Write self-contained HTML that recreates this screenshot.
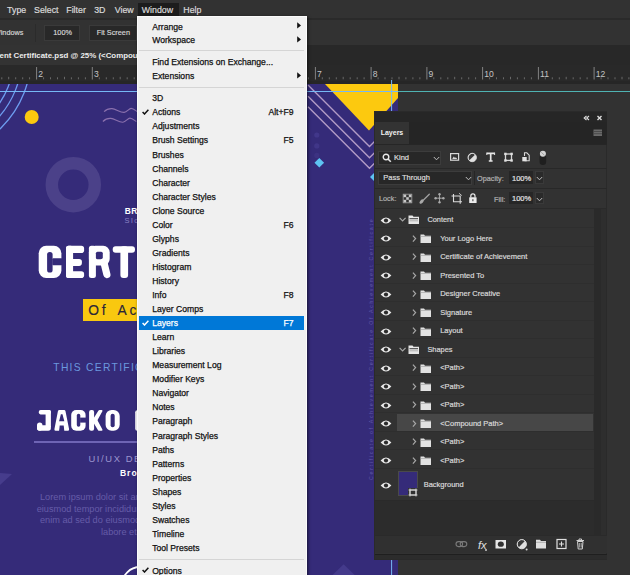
<!DOCTYPE html><html><head><meta charset="utf-8"><style>
html,body{margin:0;padding:0;width:630px;height:575px;overflow:hidden;background:#282828}
.r{position:absolute}
.t{position:absolute;white-space:nowrap;font-family:"Liberation Sans",sans-serif}
.p{-webkit-text-stroke:0.2px currentColor}
svg text{font-family:"Liberation Sans",sans-serif}
</style></head><body>
<div class="r" style="left:0px;top:0px;width:630px;height:575px;background:#323232;"></div>
<div class="r" style="left:0px;top:0px;width:630px;height:18px;background:#323232;"></div>
<div class="r" style="left:0px;top:18px;width:630px;height:1.5px;background:#2a2a2a;"></div>
<div class="r" style="left:138px;top:3px;width:41px;height:14px;background:#1c1c1c;"></div>
<div class="t " style="left:7.10px;top:5.95px;font-size:8.8px;line-height:8.8px;color:#dadada;font-weight:400;letter-spacing:0px;-webkit-text-stroke:0.2px #dadada">Type</div>
<div class="t " style="left:34.10px;top:5.95px;font-size:8.8px;line-height:8.8px;color:#dadada;font-weight:400;letter-spacing:0px;-webkit-text-stroke:0.2px #dadada">Select</div>
<div class="t " style="left:66.30px;top:5.95px;font-size:8.8px;line-height:8.8px;color:#dadada;font-weight:400;letter-spacing:0px;-webkit-text-stroke:0.2px #dadada">Filter</div>
<div class="t " style="left:94.20px;top:5.95px;font-size:8.8px;line-height:8.8px;color:#dadada;font-weight:400;letter-spacing:0px;-webkit-text-stroke:0.2px #dadada">3D</div>
<div class="t " style="left:114.80px;top:5.95px;font-size:8.8px;line-height:8.8px;color:#dadada;font-weight:400;letter-spacing:0px;-webkit-text-stroke:0.2px #dadada">View</div>
<div class="t " style="left:141.80px;top:5.95px;font-size:8.8px;line-height:8.8px;color:#dadada;font-weight:400;letter-spacing:0px;-webkit-text-stroke:0.2px #dadada">Window</div>
<div class="t " style="left:183.30px;top:5.95px;font-size:8.8px;line-height:8.8px;color:#dadada;font-weight:400;letter-spacing:0px;-webkit-text-stroke:0.2px #dadada">Help</div>
<div class="r" style="left:0px;top:19.5px;width:630px;height:25.5px;background:#323232;"></div>
<div class="r" style="left:35.3px;top:24px;width:1px;height:18px;background:#2b2b2b;"></div>
<div class="t " style="left:-6.20px;top:29.22px;font-size:7.3px;line-height:7.3px;color:#d8d8d8;font-weight:400;letter-spacing:0px;-webkit-text-stroke:0.15px #d8d8d8">Windows</div>
<div class="r" style="left:44.4px;top:25px;width:35.6px;height:15.6px;background:#282828;border:1px solid #3a3a3a;box-sizing:border-box"></div>
<div class="t " style="left:53.30px;top:29.22px;font-size:7.3px;line-height:7.3px;color:#d8d8d8;font-weight:400;letter-spacing:0px;-webkit-text-stroke:0.15px #d8d8d8">100%</div>
<div class="r" style="left:88.9px;top:25px;width:47.8px;height:15.6px;background:#282828;border:1px solid #3a3a3a;box-sizing:border-box"></div>
<div class="t " style="left:96.70px;top:29.22px;font-size:7.3px;line-height:7.3px;color:#d8d8d8;font-weight:400;letter-spacing:0px;-webkit-text-stroke:0.15px #d8d8d8">Fit Screen</div>
<div class="r" style="left:0px;top:45px;width:630px;height:19.5px;background:#282828;"></div>
<div class="r" style="left:0px;top:45px;width:300px;height:19.5px;background:#333333;"></div>
<div class="t " style="left:-0.50px;top:52.21px;font-size:7.9px;line-height:7.9px;color:#ececec;font-weight:700;letter-spacing:0px;">ent Certificate.psd @ 25% (&lt;Compound Path, RGB/8) *</div>
<div class="r" style="left:0px;top:64.5px;width:630px;height:16px;background:#292929;"></div>
<div class="r" style="left:0px;top:80.5px;width:630px;height:3.5px;background:#262626;"></div>
<svg class="r" style="left:0;top:0" width="630" height="90"><line x1="-19.1" y1="67" x2="-19.1" y2="79.5" stroke="#8c8c8c" stroke-width="0.9"/><text x="-17.5" y="77.3" fill="#c4c4c4" font-size="8.6" font-family="Liberation Sans">1</text><line x1="-12.2" y1="77.3" x2="-12.2" y2="79.3" stroke="#707070" stroke-width="0.9"/><line x1="-5.2" y1="77.3" x2="-5.2" y2="79.3" stroke="#707070" stroke-width="0.9"/><line x1="1.8" y1="77.3" x2="1.8" y2="79.3" stroke="#707070" stroke-width="0.9"/><line x1="8.7" y1="76.8" x2="8.7" y2="79.3" stroke="#707070" stroke-width="0.9"/><line x1="15.7" y1="77.3" x2="15.7" y2="79.3" stroke="#707070" stroke-width="0.9"/><line x1="22.7" y1="77.3" x2="22.7" y2="79.3" stroke="#707070" stroke-width="0.9"/><line x1="29.6" y1="77.3" x2="29.6" y2="79.3" stroke="#707070" stroke-width="0.9"/><line x1="36.6" y1="67" x2="36.6" y2="79.5" stroke="#8c8c8c" stroke-width="0.9"/><text x="38.2" y="77.3" fill="#c4c4c4" font-size="8.6" font-family="Liberation Sans">2</text><line x1="43.6" y1="77.3" x2="43.6" y2="79.3" stroke="#707070" stroke-width="0.9"/><line x1="50.5" y1="77.3" x2="50.5" y2="79.3" stroke="#707070" stroke-width="0.9"/><line x1="57.5" y1="77.3" x2="57.5" y2="79.3" stroke="#707070" stroke-width="0.9"/><line x1="64.5" y1="76.8" x2="64.5" y2="79.3" stroke="#707070" stroke-width="0.9"/><line x1="71.4" y1="77.3" x2="71.4" y2="79.3" stroke="#707070" stroke-width="0.9"/><line x1="78.4" y1="77.3" x2="78.4" y2="79.3" stroke="#707070" stroke-width="0.9"/><line x1="85.4" y1="77.3" x2="85.4" y2="79.3" stroke="#707070" stroke-width="0.9"/><line x1="92.3" y1="67" x2="92.3" y2="79.5" stroke="#8c8c8c" stroke-width="0.9"/><text x="93.9" y="77.3" fill="#c4c4c4" font-size="8.6" font-family="Liberation Sans">3</text><line x1="99.3" y1="77.3" x2="99.3" y2="79.3" stroke="#707070" stroke-width="0.9"/><line x1="106.3" y1="77.3" x2="106.3" y2="79.3" stroke="#707070" stroke-width="0.9"/><line x1="113.3" y1="77.3" x2="113.3" y2="79.3" stroke="#707070" stroke-width="0.9"/><line x1="120.2" y1="76.8" x2="120.2" y2="79.3" stroke="#707070" stroke-width="0.9"/><line x1="127.2" y1="77.3" x2="127.2" y2="79.3" stroke="#707070" stroke-width="0.9"/><line x1="134.2" y1="77.3" x2="134.2" y2="79.3" stroke="#707070" stroke-width="0.9"/><line x1="141.1" y1="77.3" x2="141.1" y2="79.3" stroke="#707070" stroke-width="0.9"/><line x1="148.1" y1="67" x2="148.1" y2="79.5" stroke="#8c8c8c" stroke-width="0.9"/><text x="149.7" y="77.3" fill="#c4c4c4" font-size="8.6" font-family="Liberation Sans">4</text><line x1="155.1" y1="77.3" x2="155.1" y2="79.3" stroke="#707070" stroke-width="0.9"/><line x1="162.0" y1="77.3" x2="162.0" y2="79.3" stroke="#707070" stroke-width="0.9"/><line x1="169.0" y1="77.3" x2="169.0" y2="79.3" stroke="#707070" stroke-width="0.9"/><line x1="176.0" y1="76.8" x2="176.0" y2="79.3" stroke="#707070" stroke-width="0.9"/><line x1="182.9" y1="77.3" x2="182.9" y2="79.3" stroke="#707070" stroke-width="0.9"/><line x1="189.9" y1="77.3" x2="189.9" y2="79.3" stroke="#707070" stroke-width="0.9"/><line x1="196.9" y1="77.3" x2="196.9" y2="79.3" stroke="#707070" stroke-width="0.9"/><line x1="203.8" y1="67" x2="203.8" y2="79.5" stroke="#8c8c8c" stroke-width="0.9"/><text x="205.4" y="77.3" fill="#c4c4c4" font-size="8.6" font-family="Liberation Sans">5</text><line x1="210.8" y1="77.3" x2="210.8" y2="79.3" stroke="#707070" stroke-width="0.9"/><line x1="217.8" y1="77.3" x2="217.8" y2="79.3" stroke="#707070" stroke-width="0.9"/><line x1="224.8" y1="77.3" x2="224.8" y2="79.3" stroke="#707070" stroke-width="0.9"/><line x1="231.7" y1="76.8" x2="231.7" y2="79.3" stroke="#707070" stroke-width="0.9"/><line x1="238.7" y1="77.3" x2="238.7" y2="79.3" stroke="#707070" stroke-width="0.9"/><line x1="245.7" y1="77.3" x2="245.7" y2="79.3" stroke="#707070" stroke-width="0.9"/><line x1="252.6" y1="77.3" x2="252.6" y2="79.3" stroke="#707070" stroke-width="0.9"/><line x1="259.6" y1="67" x2="259.6" y2="79.5" stroke="#8c8c8c" stroke-width="0.9"/><text x="261.2" y="77.3" fill="#c4c4c4" font-size="8.6" font-family="Liberation Sans">6</text><line x1="266.6" y1="77.3" x2="266.6" y2="79.3" stroke="#707070" stroke-width="0.9"/><line x1="273.5" y1="77.3" x2="273.5" y2="79.3" stroke="#707070" stroke-width="0.9"/><line x1="280.5" y1="77.3" x2="280.5" y2="79.3" stroke="#707070" stroke-width="0.9"/><line x1="287.5" y1="76.8" x2="287.5" y2="79.3" stroke="#707070" stroke-width="0.9"/><line x1="294.4" y1="77.3" x2="294.4" y2="79.3" stroke="#707070" stroke-width="0.9"/><line x1="301.4" y1="77.3" x2="301.4" y2="79.3" stroke="#707070" stroke-width="0.9"/><line x1="308.4" y1="77.3" x2="308.4" y2="79.3" stroke="#707070" stroke-width="0.9"/><line x1="315.4" y1="67" x2="315.4" y2="79.5" stroke="#8c8c8c" stroke-width="0.9"/><text x="317.0" y="77.3" fill="#c4c4c4" font-size="8.6" font-family="Liberation Sans">7</text><line x1="322.3" y1="77.3" x2="322.3" y2="79.3" stroke="#707070" stroke-width="0.9"/><line x1="329.3" y1="77.3" x2="329.3" y2="79.3" stroke="#707070" stroke-width="0.9"/><line x1="336.3" y1="77.3" x2="336.3" y2="79.3" stroke="#707070" stroke-width="0.9"/><line x1="343.2" y1="76.8" x2="343.2" y2="79.3" stroke="#707070" stroke-width="0.9"/><line x1="350.2" y1="77.3" x2="350.2" y2="79.3" stroke="#707070" stroke-width="0.9"/><line x1="357.2" y1="77.3" x2="357.2" y2="79.3" stroke="#707070" stroke-width="0.9"/><line x1="364.1" y1="77.3" x2="364.1" y2="79.3" stroke="#707070" stroke-width="0.9"/><line x1="371.1" y1="67" x2="371.1" y2="79.5" stroke="#8c8c8c" stroke-width="0.9"/><text x="372.7" y="77.3" fill="#c4c4c4" font-size="8.6" font-family="Liberation Sans">8</text><line x1="378.1" y1="77.3" x2="378.1" y2="79.3" stroke="#707070" stroke-width="0.9"/><line x1="385.0" y1="77.3" x2="385.0" y2="79.3" stroke="#707070" stroke-width="0.9"/><line x1="392.0" y1="77.3" x2="392.0" y2="79.3" stroke="#707070" stroke-width="0.9"/><line x1="399.0" y1="76.8" x2="399.0" y2="79.3" stroke="#707070" stroke-width="0.9"/><line x1="405.9" y1="77.3" x2="405.9" y2="79.3" stroke="#707070" stroke-width="0.9"/><line x1="412.9" y1="77.3" x2="412.9" y2="79.3" stroke="#707070" stroke-width="0.9"/><line x1="419.9" y1="77.3" x2="419.9" y2="79.3" stroke="#707070" stroke-width="0.9"/><line x1="426.9" y1="67" x2="426.9" y2="79.5" stroke="#8c8c8c" stroke-width="0.9"/><text x="428.5" y="77.3" fill="#c4c4c4" font-size="8.6" font-family="Liberation Sans">9</text><line x1="433.8" y1="77.3" x2="433.8" y2="79.3" stroke="#707070" stroke-width="0.9"/><line x1="440.8" y1="77.3" x2="440.8" y2="79.3" stroke="#707070" stroke-width="0.9"/><line x1="447.8" y1="77.3" x2="447.8" y2="79.3" stroke="#707070" stroke-width="0.9"/><line x1="454.7" y1="76.8" x2="454.7" y2="79.3" stroke="#707070" stroke-width="0.9"/><line x1="461.7" y1="77.3" x2="461.7" y2="79.3" stroke="#707070" stroke-width="0.9"/><line x1="468.7" y1="77.3" x2="468.7" y2="79.3" stroke="#707070" stroke-width="0.9"/><line x1="475.6" y1="77.3" x2="475.6" y2="79.3" stroke="#707070" stroke-width="0.9"/><line x1="482.6" y1="67" x2="482.6" y2="79.5" stroke="#8c8c8c" stroke-width="0.9"/><text x="484.2" y="77.3" fill="#c4c4c4" font-size="8.6" font-family="Liberation Sans">10</text><line x1="489.6" y1="77.3" x2="489.6" y2="79.3" stroke="#707070" stroke-width="0.9"/><line x1="496.5" y1="77.3" x2="496.5" y2="79.3" stroke="#707070" stroke-width="0.9"/><line x1="503.5" y1="77.3" x2="503.5" y2="79.3" stroke="#707070" stroke-width="0.9"/><line x1="510.5" y1="76.8" x2="510.5" y2="79.3" stroke="#707070" stroke-width="0.9"/><line x1="517.4" y1="77.3" x2="517.4" y2="79.3" stroke="#707070" stroke-width="0.9"/><line x1="524.4" y1="77.3" x2="524.4" y2="79.3" stroke="#707070" stroke-width="0.9"/><line x1="531.4" y1="77.3" x2="531.4" y2="79.3" stroke="#707070" stroke-width="0.9"/><line x1="538.4" y1="67" x2="538.4" y2="79.5" stroke="#8c8c8c" stroke-width="0.9"/><text x="540.0" y="77.3" fill="#c4c4c4" font-size="8.6" font-family="Liberation Sans">11</text><line x1="545.3" y1="77.3" x2="545.3" y2="79.3" stroke="#707070" stroke-width="0.9"/><line x1="552.3" y1="77.3" x2="552.3" y2="79.3" stroke="#707070" stroke-width="0.9"/><line x1="559.3" y1="77.3" x2="559.3" y2="79.3" stroke="#707070" stroke-width="0.9"/><line x1="566.2" y1="76.8" x2="566.2" y2="79.3" stroke="#707070" stroke-width="0.9"/><line x1="573.2" y1="77.3" x2="573.2" y2="79.3" stroke="#707070" stroke-width="0.9"/><line x1="580.2" y1="77.3" x2="580.2" y2="79.3" stroke="#707070" stroke-width="0.9"/><line x1="587.1" y1="77.3" x2="587.1" y2="79.3" stroke="#707070" stroke-width="0.9"/><line x1="594.1" y1="67" x2="594.1" y2="79.5" stroke="#8c8c8c" stroke-width="0.9"/><text x="595.7" y="77.3" fill="#c4c4c4" font-size="8.6" font-family="Liberation Sans">12</text><line x1="601.1" y1="77.3" x2="601.1" y2="79.3" stroke="#707070" stroke-width="0.9"/><line x1="608.0" y1="77.3" x2="608.0" y2="79.3" stroke="#707070" stroke-width="0.9"/><line x1="615.0" y1="77.3" x2="615.0" y2="79.3" stroke="#707070" stroke-width="0.9"/><line x1="622.0" y1="76.8" x2="622.0" y2="79.3" stroke="#707070" stroke-width="0.9"/><line x1="628.9" y1="77.3" x2="628.9" y2="79.3" stroke="#707070" stroke-width="0.9"/><line x1="635.9" y1="77.3" x2="635.9" y2="79.3" stroke="#707070" stroke-width="0.9"/><line x1="642.9" y1="77.3" x2="642.9" y2="79.3" stroke="#707070" stroke-width="0.9"/></svg>
<svg class="r" style="left:0;top:0" width="630" height="575">
<rect x="-10" y="84" width="408" height="500" fill="#352b79"/>
<circle cx="-70" cy="56" r="84" fill="none" stroke="#6e9df0" stroke-width="1.3" clip-path="url(#cv)"/>
<circle cx="-70" cy="56" r="92" fill="none" stroke="#6e9df0" stroke-width="1.3" clip-path="url(#cv)"/>
<circle cx="-70" cy="56" r="101" fill="none" stroke="#6e9df0" stroke-width="1.3" clip-path="url(#cv)"/>
<clipPath id="cv"><rect x="0" y="84" width="398" height="500"/></clipPath>
<circle cx="31.7" cy="117" r="7" fill="#fcc90f"/>
<path transform="translate(0 0)" d="M104.1 111.7 C 106.5 109.2, 109 108.4, 112 108.6 C 116 109, 120 112.6, 124.1 112.4 C 127 112.2, 129 108.3, 131.1 108.3 C 133.2 108.3, 135 110, 137.5 111.8" fill="none" stroke="#8a70ad" stroke-width="1.15"/>
<path transform="translate(-1.2 9.8)" d="M104.1 111.7 C 106.5 109.2, 109 108.4, 112 108.6 C 116 109, 120 112.6, 124.1 112.4 C 127 112.2, 129 108.3, 131.1 108.3 C 133.2 108.3, 135 110, 137.5 111.8" fill="none" stroke="#8a70ad" stroke-width="1.15"/>
<circle cx="73.3" cy="184.7" r="21.5" fill="none" stroke="#4b4189" stroke-width="12.5"/>
</svg>
<div class="t " style="left:124.80px;top:206.99px;font-size:8.4px;line-height:8.4px;color:#ffffff;font-weight:700;letter-spacing:0.3px;">BRAND</div>
<div class="t " style="left:124.50px;top:217.15px;font-size:7.5px;line-height:7.5px;color:#8b83c4;font-weight:400;letter-spacing:1.5px;">Slogan</div>
<svg class="r" style="left:0;top:0" width="145" height="575"><rect x="38.7" y="245.8" width="22.7" height="32.2" rx="7.5" fill="#fff"/><rect x="47.1" y="252" width="5.5" height="20.5" rx="2.6" fill="#352b79"/><rect x="52.3" y="258.2" width="10" height="7" rx="1" fill="#352b79"/><rect x="66" y="245.8" width="7.1" height="32.2" rx="2.5" fill="#fff"/><rect x="66" y="245.8" width="18.1" height="7.3" rx="2.8" fill="#fff"/><rect x="66" y="259" width="15.9" height="6.9" rx="2.8" fill="#fff"/><rect x="66" y="271.3" width="18.1" height="6.7" rx="2.8" fill="#fff"/><rect x="88.9" y="245.8" width="7" height="32.2" rx="2.5" fill="#fff"/><rect x="88.9" y="245.8" width="20.8" height="19.8" rx="6.5" fill="#fff"/><rect x="95.9" y="251.7" width="6.9" height="7.6" rx="1.6" fill="#352b79"/><path d="M103.8 262 L106.9 274.5" stroke="#fff" stroke-width="7.2" stroke-linecap="round"/><rect x="112.7" y="246.2" width="22.3" height="6.6" rx="3" fill="#fff"/><rect x="120.4" y="246.2" width="7.7" height="31.8" rx="3" fill="#fff"/><rect x="38.8" y="410" width="12.1" height="4.4" rx="1.8" fill="#fff"/><rect x="45.6" y="410" width="5.3" height="18" rx="1.8" fill="#fff"/><rect x="37" y="425.3" width="13.9" height="5.5" rx="2.7" fill="#fff"/><rect x="37" y="422.6" width="5.4" height="8.2" rx="2.7" fill="#fff"/><path d="M54.4 429.2 L57.9 411.2 Q58.1 410 59.4 410 H64 Q65.3 410 65.5 411.2 L69.1 429.2 Q69.2 430.8 67.8 430.8 H55.7 Q54.3 430.8 54.4 429.2 Z" fill="#fff"/><path d="M59.1 421.2 L60.9 414.2 H62.5 L64.3 421.2 Z" fill="#352b79"/><path d="M59.7 425.4 H63.7 L64.3 431 H59.1 Z" fill="#352b79"/><rect x="71.2" y="410" width="14.4" height="20.8" rx="5" fill="#fff"/><rect x="76.8" y="413.8" width="3.5" height="12.9" rx="1.7" fill="#352b79"/><rect x="80.1" y="417.6" width="6" height="5" fill="#352b79"/><rect x="89.1" y="410" width="5" height="20.8" rx="2" fill="#fff"/><path d="M93.5 418.5 L98.2 410.9 Q98.7 410 99.7 410 H101.8 Q102.9 410.2 102.4 411.2 L96.6 421.8 H93.5 Z" fill="#fff"/><path d="M93.5 419 H96.8 L102.4 429.6 Q102.8 430.8 101.6 430.8 H99.3 Q98.4 430.8 97.9 429.9 L93.5 422.8 Z" fill="#fff"/><rect x="105.6" y="410" width="14.1" height="20.8" rx="6" fill="#fff"/><rect x="110.6" y="413.8" width="4.1" height="13.5" rx="2" fill="#352b79"/><rect x="135.2" y="410.3" width="6" height="20.5" rx="2" fill="#fff"/></svg>
<div class="r" style="left:83.3px;top:298.8px;width:60px;height:22.2px;background:#f9c80f;"></div>
<div class="t " style="left:88.20px;top:303.62px;font-size:13.8px;line-height:13.8px;color:#2a2638;font-weight:400;letter-spacing:0px;-webkit-text-stroke:0.15px #2a2638">O</div>
<div class="t " style="left:101.80px;top:303.62px;font-size:13.8px;line-height:13.8px;color:#2a2638;font-weight:400;letter-spacing:0px;-webkit-text-stroke:0.15px #2a2638">f</div>
<div class="t " style="left:117.60px;top:303.62px;font-size:13.8px;line-height:13.8px;color:#2a2638;font-weight:400;letter-spacing:0px;-webkit-text-stroke:0.15px #2a2638">A</div>
<div class="t " style="left:129.40px;top:303.62px;font-size:13.8px;line-height:13.8px;color:#2a2638;font-weight:400;letter-spacing:0px;-webkit-text-stroke:0.15px #2a2638">c</div>
<div class="t " style="left:53.30px;top:363.48px;font-size:10.3px;line-height:10.3px;color:#6b98de;font-weight:400;letter-spacing:1.3px;">THIS CERTIFICATE</div>
<div class="r" style="left:33.5px;top:441.3px;width:110px;height:1.5px;background:#6e64b4;"></div>
<div class="t " style="left:88.50px;top:454.24px;font-size:9.4px;line-height:9.4px;color:#9c95cf;font-weight:400;letter-spacing:1.6px;">UI/UX DESIGNER</div>
<div class="t " style="left:119.90px;top:468.92px;font-size:8.6px;line-height:8.6px;color:#ffffff;font-weight:700;letter-spacing:1.0px;">Brooklyn</div>
<div class="t " style="left:40.00px;top:493.01px;font-size:9.2px;line-height:9.2px;color:#655ca8;font-weight:400;letter-spacing:0px;">Lorem ipsum dolor sit amet</div>
<div class="t " style="left:36.70px;top:504.71px;font-size:9.2px;line-height:9.2px;color:#655ca8;font-weight:400;letter-spacing:0px;">eiusmod tempor incididunt</div>
<div class="t " style="left:40.00px;top:516.31px;font-size:9.2px;line-height:9.2px;color:#655ca8;font-weight:400;letter-spacing:0px;">enim ad sed do eiusmod</div>
<div class="t " style="left:101.00px;top:527.81px;font-size:9.2px;line-height:9.2px;color:#655ca8;font-weight:400;letter-spacing:0px;">labore et</div>
<svg class="r" style="left:0;top:0" width="630" height="575">
<path d="M0 473 L12 474 L0 485 Z" fill="#463c8c"/>
<circle cx="140" cy="585" r="18" fill="none" stroke="#fff" stroke-width="1.8"/>
<path d="M325 84 L398 84 L398 98 L369 130.5 Z" fill="#fcc90f"/>
<path d="M308 85 L369.5 146.5 L385 131" fill="none" stroke="#b39cc6" stroke-width="1.35"/>
<path d="M308 96.3 L369.5 157.8 L385 142.3" fill="none" stroke="#b39cc6" stroke-width="1.35"/>
<path d="M308 106.7 L369.5 168.2 L385 152.7" fill="none" stroke="#b39cc6" stroke-width="1.35"/>
<circle cx="316.8" cy="135" r="2.6" fill="#43398c" opacity="0.9"/>
<circle cx="316.8" cy="145.9" r="2.6" fill="#43398c" opacity="0.8"/>
<circle cx="316.8" cy="155.4" r="2.6" fill="#43398c" opacity="0.5"/>
<path d="M319.3 158 L324.1 162.8 L319.3 167.6 L314.5 162.8 Z" fill="#5ec3f2"/>
<path d="M375 172 L380 177 L375 182 L370 177 Z" fill="#5ec3f2"/>
<path d="M331.5 576 L343.6 564.3 L355.7 576 Z" fill="#443a8b"/>
<line x1="0" y1="91.5" x2="398" y2="91.5" stroke="#76b8f5" stroke-width="1"/>
<line x1="398" y1="91.5" x2="630" y2="91.5" stroke="#4fb3b3" stroke-width="1"/>
<line x1="391.6" y1="80" x2="391.6" y2="575" stroke="#76b8f5" stroke-width="1"/>
</svg>
<div class="t" id="rot" style="left:369.3px;top:480px;font-size:5.2px;line-height:5.2px;color:#7f78c2;transform-origin:0 0;transform:rotate(-90deg);white-space:nowrap;letter-spacing:1.76px;opacity:0.6">Certificate of Achievement Certificate Of Achievement Certificate</div>
<div class="r" style="left:137px;top:16px;width:170px;height:570px;background:#f0f0f0;border:1px solid #fbfbfb;box-sizing:border-box;box-shadow:1px 1px 3px rgba(0,0,0,0.6)"></div>
<div class="t " style="left:152.20px;top:22.52px;font-size:8.6px;line-height:8.6px;color:#111111;font-weight:400;letter-spacing:0px;-webkit-text-stroke:0.25px #111111">Arrange</div>
<svg class="r" style="left:297px;top:22.30px" width="5" height="7"><path d="M0.2 0.3 L4 3.4 L0.2 6.6 Z" fill="#111"/></svg>
<div class="t " style="left:152.20px;top:36.32px;font-size:8.6px;line-height:8.6px;color:#111111;font-weight:400;letter-spacing:0px;-webkit-text-stroke:0.25px #111111">Workspace</div>
<svg class="r" style="left:297px;top:36.10px" width="5" height="7"><path d="M0.2 0.3 L4 3.4 L0.2 6.6 Z" fill="#111"/></svg>
<div class="r" style="left:139px;top:50.2px;width:165px;height:1px;background:#d5d5d5;"></div>
<div class="t " style="left:152.20px;top:57.82px;font-size:8.6px;line-height:8.6px;color:#111111;font-weight:400;letter-spacing:0px;-webkit-text-stroke:0.25px #111111">Find Extensions on Exchange...</div>
<div class="t " style="left:152.20px;top:71.82px;font-size:8.6px;line-height:8.6px;color:#111111;font-weight:400;letter-spacing:0px;-webkit-text-stroke:0.25px #111111">Extensions</div>
<svg class="r" style="left:297px;top:71.60px" width="5" height="7"><path d="M0.2 0.3 L4 3.4 L0.2 6.6 Z" fill="#111"/></svg>
<div class="r" style="left:139px;top:86.5px;width:165px;height:1px;background:#d5d5d5;"></div>
<div class="t " style="left:152.20px;top:94.32px;font-size:8.6px;line-height:8.6px;color:#111111;font-weight:400;letter-spacing:0px;-webkit-text-stroke:0.25px #111111">3D</div>
<div class="t " style="left:152.20px;top:108.37px;font-size:8.6px;line-height:8.6px;color:#111111;font-weight:400;letter-spacing:0px;-webkit-text-stroke:0.25px #111111">Actions</div>
<div class="t " style="left:292.50px;top:108.37px;font-size:8.6px;line-height:8.6px;color:#111111;font-weight:400;letter-spacing:0px;"></div>
<div class="t" style="right:336.5px;top:108.37px;font-size:8.6px;line-height:8.6px;color:#111111;-webkit-text-stroke:0.25px #111111">Alt+F9</div>
<svg class="r" style="left:141.5px;top:109.15px" width="7" height="6"><path d="M0.6 3 L2.5 5 L6.4 0.8" fill="none" stroke="#111111" stroke-width="1.5"/></svg>
<div class="t " style="left:152.20px;top:122.42px;font-size:8.6px;line-height:8.6px;color:#111111;font-weight:400;letter-spacing:0px;-webkit-text-stroke:0.25px #111111">Adjustments</div>
<div class="t " style="left:152.20px;top:136.47px;font-size:8.6px;line-height:8.6px;color:#111111;font-weight:400;letter-spacing:0px;-webkit-text-stroke:0.25px #111111">Brush Settings</div>
<div class="t " style="left:292.50px;top:136.47px;font-size:8.6px;line-height:8.6px;color:#111111;font-weight:400;letter-spacing:0px;"></div>
<div class="t" style="right:336.5px;top:136.47px;font-size:8.6px;line-height:8.6px;color:#111111;-webkit-text-stroke:0.25px #111111">F5</div>
<div class="t " style="left:152.20px;top:150.52px;font-size:8.6px;line-height:8.6px;color:#111111;font-weight:400;letter-spacing:0px;-webkit-text-stroke:0.25px #111111">Brushes</div>
<div class="t " style="left:152.20px;top:164.57px;font-size:8.6px;line-height:8.6px;color:#111111;font-weight:400;letter-spacing:0px;-webkit-text-stroke:0.25px #111111">Channels</div>
<div class="t " style="left:152.20px;top:178.62px;font-size:8.6px;line-height:8.6px;color:#111111;font-weight:400;letter-spacing:0px;-webkit-text-stroke:0.25px #111111">Character</div>
<div class="t " style="left:152.20px;top:192.67px;font-size:8.6px;line-height:8.6px;color:#111111;font-weight:400;letter-spacing:0px;-webkit-text-stroke:0.25px #111111">Character Styles</div>
<div class="t " style="left:152.20px;top:206.72px;font-size:8.6px;line-height:8.6px;color:#111111;font-weight:400;letter-spacing:0px;-webkit-text-stroke:0.25px #111111">Clone Source</div>
<div class="t " style="left:152.20px;top:220.77px;font-size:8.6px;line-height:8.6px;color:#111111;font-weight:400;letter-spacing:0px;-webkit-text-stroke:0.25px #111111">Color</div>
<div class="t " style="left:292.50px;top:220.77px;font-size:8.6px;line-height:8.6px;color:#111111;font-weight:400;letter-spacing:0px;"></div>
<div class="t" style="right:336.5px;top:220.77px;font-size:8.6px;line-height:8.6px;color:#111111;-webkit-text-stroke:0.25px #111111">F6</div>
<div class="t " style="left:152.20px;top:234.82px;font-size:8.6px;line-height:8.6px;color:#111111;font-weight:400;letter-spacing:0px;-webkit-text-stroke:0.25px #111111">Glyphs</div>
<div class="t " style="left:152.20px;top:248.87px;font-size:8.6px;line-height:8.6px;color:#111111;font-weight:400;letter-spacing:0px;-webkit-text-stroke:0.25px #111111">Gradients</div>
<div class="t " style="left:152.20px;top:262.92px;font-size:8.6px;line-height:8.6px;color:#111111;font-weight:400;letter-spacing:0px;-webkit-text-stroke:0.25px #111111">Histogram</div>
<div class="t " style="left:152.20px;top:276.97px;font-size:8.6px;line-height:8.6px;color:#111111;font-weight:400;letter-spacing:0px;-webkit-text-stroke:0.25px #111111">History</div>
<div class="t " style="left:152.20px;top:291.02px;font-size:8.6px;line-height:8.6px;color:#111111;font-weight:400;letter-spacing:0px;-webkit-text-stroke:0.25px #111111">Info</div>
<div class="t " style="left:292.50px;top:291.02px;font-size:8.6px;line-height:8.6px;color:#111111;font-weight:400;letter-spacing:0px;"></div>
<div class="t" style="right:336.5px;top:291.02px;font-size:8.6px;line-height:8.6px;color:#111111;-webkit-text-stroke:0.25px #111111">F8</div>
<div class="t " style="left:152.20px;top:305.07px;font-size:8.6px;line-height:8.6px;color:#111111;font-weight:400;letter-spacing:0px;-webkit-text-stroke:0.25px #111111">Layer Comps</div>
<div class="r" style="left:139.1px;top:316.09999999999997px;width:165.4px;height:13.7px;background:#0078d7;"></div>
<div class="t " style="left:152.20px;top:319.12px;font-size:8.6px;line-height:8.6px;color:#ffffff;font-weight:400;letter-spacing:0px;-webkit-text-stroke:0.25px #ffffff">Layers</div>
<div class="t " style="left:292.50px;top:319.12px;font-size:8.6px;line-height:8.6px;color:#ffffff;font-weight:400;letter-spacing:0px;"></div>
<div class="t" style="right:336.5px;top:319.12px;font-size:8.6px;line-height:8.6px;color:#ffffff;-webkit-text-stroke:0.25px #ffffff">F7</div>
<svg class="r" style="left:141.5px;top:319.90px" width="7" height="6"><path d="M0.6 3 L2.5 5 L6.4 0.8" fill="none" stroke="#ffffff" stroke-width="1.5"/></svg>
<div class="t " style="left:152.20px;top:333.17px;font-size:8.6px;line-height:8.6px;color:#111111;font-weight:400;letter-spacing:0px;-webkit-text-stroke:0.25px #111111">Learn</div>
<div class="t " style="left:152.20px;top:347.22px;font-size:8.6px;line-height:8.6px;color:#111111;font-weight:400;letter-spacing:0px;-webkit-text-stroke:0.25px #111111">Libraries</div>
<div class="t " style="left:152.20px;top:361.27px;font-size:8.6px;line-height:8.6px;color:#111111;font-weight:400;letter-spacing:0px;-webkit-text-stroke:0.25px #111111">Measurement Log</div>
<div class="t " style="left:152.20px;top:375.32px;font-size:8.6px;line-height:8.6px;color:#111111;font-weight:400;letter-spacing:0px;-webkit-text-stroke:0.25px #111111">Modifier Keys</div>
<div class="t " style="left:152.20px;top:389.37px;font-size:8.6px;line-height:8.6px;color:#111111;font-weight:400;letter-spacing:0px;-webkit-text-stroke:0.25px #111111">Navigator</div>
<div class="t " style="left:152.20px;top:403.42px;font-size:8.6px;line-height:8.6px;color:#111111;font-weight:400;letter-spacing:0px;-webkit-text-stroke:0.25px #111111">Notes</div>
<div class="t " style="left:152.20px;top:417.47px;font-size:8.6px;line-height:8.6px;color:#111111;font-weight:400;letter-spacing:0px;-webkit-text-stroke:0.25px #111111">Paragraph</div>
<div class="t " style="left:152.20px;top:431.52px;font-size:8.6px;line-height:8.6px;color:#111111;font-weight:400;letter-spacing:0px;-webkit-text-stroke:0.25px #111111">Paragraph Styles</div>
<div class="t " style="left:152.20px;top:445.57px;font-size:8.6px;line-height:8.6px;color:#111111;font-weight:400;letter-spacing:0px;-webkit-text-stroke:0.25px #111111">Paths</div>
<div class="t " style="left:152.20px;top:459.62px;font-size:8.6px;line-height:8.6px;color:#111111;font-weight:400;letter-spacing:0px;-webkit-text-stroke:0.25px #111111">Patterns</div>
<div class="t " style="left:152.20px;top:473.67px;font-size:8.6px;line-height:8.6px;color:#111111;font-weight:400;letter-spacing:0px;-webkit-text-stroke:0.25px #111111">Properties</div>
<div class="t " style="left:152.20px;top:487.72px;font-size:8.6px;line-height:8.6px;color:#111111;font-weight:400;letter-spacing:0px;-webkit-text-stroke:0.25px #111111">Shapes</div>
<div class="t " style="left:152.20px;top:501.77px;font-size:8.6px;line-height:8.6px;color:#111111;font-weight:400;letter-spacing:0px;-webkit-text-stroke:0.25px #111111">Styles</div>
<div class="t " style="left:152.20px;top:515.82px;font-size:8.6px;line-height:8.6px;color:#111111;font-weight:400;letter-spacing:0px;-webkit-text-stroke:0.25px #111111">Swatches</div>
<div class="t " style="left:152.20px;top:529.87px;font-size:8.6px;line-height:8.6px;color:#111111;font-weight:400;letter-spacing:0px;-webkit-text-stroke:0.25px #111111">Timeline</div>
<div class="t " style="left:152.20px;top:543.92px;font-size:8.6px;line-height:8.6px;color:#111111;font-weight:400;letter-spacing:0px;-webkit-text-stroke:0.25px #111111">Tool Presets</div>
<div class="r" style="left:139px;top:558.6px;width:165px;height:1px;background:#d5d5d5;"></div>
<div class="t " style="left:152.20px;top:566.52px;font-size:8.6px;line-height:8.6px;color:#111111;font-weight:400;letter-spacing:0px;-webkit-text-stroke:0.25px #111111">Options</div>
<svg class="r" style="left:141.5px;top:567.30px" width="7" height="6"><path d="M0.6 3 L2.5 5 L6.4 0.8" fill="none" stroke="#111111" stroke-width="1.5"/></svg>
<div class="r" style="left:374.5px;top:112.4px;width:231.5px;height:447px;background:#323232;box-shadow:0 0 0 1px #2a2a2a"></div>
<div class="r" style="left:374.5px;top:112.4px;width:232px;height:10px;background:#262626;"></div>
<div class="r" style="left:374.5px;top:122.4px;width:232px;height:21.5px;background:#252525;"></div>
<div class="r" style="left:374.5px;top:122.4px;width:34.5px;height:21.5px;background:#333333;"></div>
<div class="t " style="left:380.70px;top:129.27px;font-size:7.0px;line-height:7.0px;color:#f0f0f0;font-weight:700;letter-spacing:0px;">Layers</div>
<svg class="r" style="left:580px;top:113px" width="26" height="10"><path d="M6.5 3 L4.2 5 L6.5 7 M9 3 L6.7 5 L9 7" fill="none" stroke="#ddd" stroke-width="1.1"/><path d="M17.5 3 L21.5 7 M21.5 3 L17.5 7" stroke="#ddd" stroke-width="1.4"/></svg>
<svg class="r" style="left:593px;top:129px" width="10" height="8"><rect x="0.5" y="0.5" width="8.5" height="6.5" fill="#6a6a6a"/><path d="M1 2.5 H9 M1 4.7 H9" stroke="#444" stroke-width="0.8"/></svg>
<div class="r" style="left:374.5px;top:144px;width:232px;height:1px;background:#262626;"></div>
<div class="r" style="left:378.2px;top:151.1px;width:62.7px;height:13.5px;background:#272727;border:1px solid #3c3c3c;box-sizing:border-box"></div>
<svg class="r" style="left:382px;top:152.5px" width="10" height="10"><circle cx="4" cy="4" r="2.8" fill="none" stroke="#e6e6e6" stroke-width="1.4"/><path d="M6 6 L8.8 8.8" stroke="#e6e6e6" stroke-width="1.6"/></svg>
<div class="t p" style="left:394.00px;top:153.55px;font-size:7.5px;line-height:7.5px;color:#dcdcdc;font-weight:400;letter-spacing:0px;">Kind</div>
<svg class="r" style="left:433px;top:155.5px" width="7" height="5"><path d="M0.8 1 L3.5 3.8 L6.2 1" fill="none" stroke="#bdbdbd" stroke-width="1"/></svg>
<svg class="r" style="left:445px;top:148px" width="110" height="20"><rect x="5.6" y="5.6" width="8" height="6.6" fill="none" stroke="#d8d8d8" stroke-width="1.2"/><path d="M7.2 11 L8.8 8.6 L10 10 L10.9 9.2 L12.2 11 Z" fill="#d8d8d8"/><circle cx="27.2" cy="9.5" r="4.2" fill="#e0e0e0"/><path d="M24.4 12.3 A4 4 0 0 1 30 6.7 Z" fill="#3a3a3a"/><circle cx="27.2" cy="9.5" r="4.2" fill="none" stroke="#e0e0e0" stroke-width="0.9"/><path d="M41.8 5.4 H49.6 M45.7 5.4 V13 M43.8 13 H47.6" stroke="#e6e6e6" stroke-width="1.7" fill="none"/><path d="M41.8 4.6 V7 M49.6 4.6 V7" stroke="#e6e6e6" stroke-width="1"/><rect x="60.5" y="6" width="6" height="6.4" fill="none" stroke="#d8d8d8" stroke-width="1.3"/><rect x="59.2" y="4.7" width="2.4" height="2.4" fill="#e0e0e0"/><rect x="65.4" y="4.7" width="2.4" height="2.4" fill="#e0e0e0"/><rect x="59.2" y="11.3" width="2.4" height="2.4" fill="#e0e0e0"/><rect x="65.4" y="11.3" width="2.4" height="2.4" fill="#e0e0e0"/><path d="M79.5 12.8 H84.2 V7.2 L81.8 4.8 H79.5 V8" fill="none" stroke="#d8d8d8" stroke-width="1.1"/><rect x="77.3" y="9" width="4.4" height="4.3" fill="#e4e4e4"/><rect x="94.6" y="6" width="6.6" height="11" rx="3.3" fill="#1f1f1f"/><circle cx="97.9" cy="5.8" r="3" fill="#d4d4d4"/><path d="M96.3 4.3 L99.5 7.3" stroke="#888" stroke-width="0.7"/></svg>
<div class="r" style="left:374.5px;top:168.3px;width:232px;height:1px;background:#282828;"></div>
<div class="r" style="left:378.2px;top:171px;width:93.6px;height:14.2px;background:#272727;border:1px solid #3c3c3c;box-sizing:border-box"></div>
<div class="t p" style="left:383.30px;top:174.25px;font-size:7.5px;line-height:7.5px;color:#dcdcdc;font-weight:400;letter-spacing:0px;">Pass Through</div>
<svg class="r" style="left:464.5px;top:176px" width="7" height="5"><path d="M0.8 1 L3.5 3.8 L6.2 1" fill="none" stroke="#bdbdbd" stroke-width="1"/></svg>
<div class="r" style="left:473.5px;top:171px;width:1px;height:14px;background:#262626;"></div>
<div class="t p" style="left:477.00px;top:174.82px;font-size:7.3px;line-height:7.3px;color:#b0b0b0;font-weight:400;letter-spacing:0px;">Opacity:</div>
<div class="r" style="left:508.6px;top:171.4px;width:24.7px;height:12.4px;background:#262626;"></div>
<div class="t p" style="left:512.00px;top:174.65px;font-size:7.5px;line-height:7.5px;color:#e0e0e0;font-weight:400;letter-spacing:0px;">100%</div>
<div class="r" style="left:534.5px;top:171.4px;width:9.8px;height:12.4px;background:#2a2a2a;border:1px solid #3a3a3a;box-sizing:border-box"></div>
<svg class="r" style="left:536px;top:176px" width="7" height="5"><path d="M0.8 1 L3.5 3.8 L6.2 1" fill="none" stroke="#bdbdbd" stroke-width="1"/></svg>
<div class="r" style="left:374.5px;top:187.6px;width:232px;height:1px;background:#282828;"></div>
<div class="t p" style="left:379.00px;top:194.92px;font-size:7.3px;line-height:7.3px;color:#b0b0b0;font-weight:400;letter-spacing:0px;">Lock:</div>
<svg class="r" style="left:400px;top:191px" width="80" height="14"><rect x="3.2" y="3.2" width="8.6" height="8.6" fill="none" stroke="#9a9a9a" stroke-width="0.9"/><rect x="3.6" y="3.6" width="2.6" height="2.6" fill="#c8c8c8"/><rect x="8.8" y="3.6" width="2.6" height="2.6" fill="#c8c8c8"/><rect x="6.2" y="6.2" width="2.6" height="2.6" fill="#c8c8c8"/><rect x="3.6" y="8.8" width="2.6" height="2.6" fill="#c8c8c8"/><rect x="8.8" y="8.8" width="2.6" height="2.6" fill="#c8c8c8"/><path d="M29.3 3.2 L23.5 9" stroke="#a0a0a0" stroke-width="1.3" stroke-linecap="round"/><ellipse cx="21.6" cy="10.6" rx="2.6" ry="1.5" transform="rotate(-45 21.6 10.6)" fill="#a8a8a8"/><path d="M39.5 3.5 V11 M35.8 7.2 H43.2" stroke="#9a9a9a" stroke-width="1"/><circle cx="39.5" cy="3.3" r="1.2" fill="#aaa"/><circle cx="39.5" cy="11.2" r="1.2" fill="#aaa"/><circle cx="35.6" cy="7.2" r="1.2" fill="#aaa"/><circle cx="43.4" cy="7.2" r="1.2" fill="#aaa"/><circle cx="39.5" cy="7.2" r="1" fill="#aaa"/><path d="M51.5 5 H60.2 V12.8 M53.5 3 V10.8 H62" fill="none" stroke="#dcdcdc" stroke-width="1.1"/><path d="M59 2.2 L61.8 4.6" stroke="#cfcfcf" stroke-width="0.9"/><rect x="69.2" y="6.3" width="7.4" height="5.8" rx="0.5" fill="#ececec"/><path d="M70.8 6.5 V4.9 A2.1 2.1 0 0 1 75 4.9 V6.5" fill="none" stroke="#ececec" stroke-width="1.2"/><rect x="72.4" y="8.2" width="1" height="2" fill="#333"/></svg>
<div class="t p" style="left:494.00px;top:195.72px;font-size:7.3px;line-height:7.3px;color:#b0b0b0;font-weight:400;letter-spacing:0px;">Fill:</div>
<div class="r" style="left:508.6px;top:192.4px;width:24.7px;height:11.4px;background:#262626;"></div>
<div class="t p" style="left:512.00px;top:195.15px;font-size:7.5px;line-height:7.5px;color:#e0e0e0;font-weight:400;letter-spacing:0px;">100%</div>
<div class="r" style="left:534.5px;top:192.4px;width:9.8px;height:11.4px;background:#2a2a2a;border:1px solid #3a3a3a;box-sizing:border-box"></div>
<svg class="r" style="left:536px;top:196.5px" width="7" height="5"><path d="M0.8 1 L3.5 3.8 L6.2 1" fill="none" stroke="#bdbdbd" stroke-width="1"/></svg>
<div class="r" style="left:374.5px;top:207.5px;width:232px;height:1px;background:#2a2a2a;"></div>
<div class="r" style="left:593.5px;top:209px;width:7px;height:326px;background:#2a2a2a;"></div>
<div class="r" style="left:600.5px;top:209px;width:5.5px;height:326px;background:#2e2e2e;"></div>
<div class="r" style="left:374.5px;top:227.2px;width:219px;height:1px;background:#2e2e2e;"></div>
<svg class="r" style="left:379.6px;top:215.5px" width="12" height="9"><path d="M0.6 4.5 Q6 -1.6 11.4 4.5 Q6 10.6 0.6 4.5 Z" fill="#e8e8e8"/><circle cx="6" cy="4.5" r="2.1" fill="#2c2c2c"/></svg>
<svg class="r" style="left:399px;top:217.0px" width="8" height="5"><path d="M0.6 0.8 L3.6 3.8 L6.6 0.8" fill="none" stroke="#a8a8a8" stroke-width="1.2"/></svg>
<svg class="r" style="left:407.8px;top:215.2px" width="12" height="10"><path d="M0.5 0.5 H4.5 L5.5 1.8 H11 V9 H0.5 Z" fill="#e6e6e6"/><path d="M1.5 3.2 H10 V4.2 H1.5 Z" fill="#3a3a3a"/><path d="M1.5 5.8 H10" stroke="#9a9a9a" stroke-width="0.7"/></svg>
<div class="t p" style="left:427.40px;top:216.24px;font-size:7.4px;line-height:7.4px;color:#d8d8d8;font-weight:400;letter-spacing:0px;">Content</div>
<div class="r" style="left:374.5px;top:245.7px;width:219px;height:1px;background:#2e2e2e;"></div>
<svg class="r" style="left:379.6px;top:234.0px" width="12" height="9"><path d="M0.6 4.5 Q6 -1.6 11.4 4.5 Q6 10.6 0.6 4.5 Z" fill="#e8e8e8"/><circle cx="6" cy="4.5" r="2.1" fill="#2c2c2c"/></svg>
<svg class="r" style="left:411.5px;top:234.8px" width="5" height="8"><path d="M0.9 0.6 L3.6 3.6 L0.9 6.6" fill="none" stroke="#a8a8a8" stroke-width="1.2"/></svg>
<svg class="r" style="left:419.8px;top:234.0px" width="12" height="10"><path d="M0.5 0.5 H4 L5 1.8 H11 V9 H0.5 Z" fill="#e2e2e2"/><path d="M0.5 2.5 H11" stroke="#9a9a9a" stroke-width="0.6"/></svg>
<div class="t p" style="left:440.20px;top:234.75px;font-size:7.5px;line-height:7.5px;color:#d8d8d8;font-weight:400;letter-spacing:0px;">Your Logo Here</div>
<div class="r" style="left:374.5px;top:264.2px;width:219px;height:1px;background:#2e2e2e;"></div>
<svg class="r" style="left:379.6px;top:252.5px" width="12" height="9"><path d="M0.6 4.5 Q6 -1.6 11.4 4.5 Q6 10.6 0.6 4.5 Z" fill="#e8e8e8"/><circle cx="6" cy="4.5" r="2.1" fill="#2c2c2c"/></svg>
<svg class="r" style="left:411.5px;top:253.3px" width="5" height="8"><path d="M0.9 0.6 L3.6 3.6 L0.9 6.6" fill="none" stroke="#a8a8a8" stroke-width="1.2"/></svg>
<svg class="r" style="left:419.8px;top:252.5px" width="12" height="10"><path d="M0.5 0.5 H4 L5 1.8 H11 V9 H0.5 Z" fill="#e2e2e2"/><path d="M0.5 2.5 H11" stroke="#9a9a9a" stroke-width="0.6"/></svg>
<div class="t p" style="left:440.20px;top:253.25px;font-size:7.5px;line-height:7.5px;color:#d8d8d8;font-weight:400;letter-spacing:0px;">Certificate of Achievement</div>
<div class="r" style="left:374.5px;top:282.7px;width:219px;height:1px;background:#2e2e2e;"></div>
<svg class="r" style="left:379.6px;top:271.0px" width="12" height="9"><path d="M0.6 4.5 Q6 -1.6 11.4 4.5 Q6 10.6 0.6 4.5 Z" fill="#e8e8e8"/><circle cx="6" cy="4.5" r="2.1" fill="#2c2c2c"/></svg>
<svg class="r" style="left:411.5px;top:271.8px" width="5" height="8"><path d="M0.9 0.6 L3.6 3.6 L0.9 6.6" fill="none" stroke="#a8a8a8" stroke-width="1.2"/></svg>
<svg class="r" style="left:419.8px;top:271.0px" width="12" height="10"><path d="M0.5 0.5 H4 L5 1.8 H11 V9 H0.5 Z" fill="#e2e2e2"/><path d="M0.5 2.5 H11" stroke="#9a9a9a" stroke-width="0.6"/></svg>
<div class="t p" style="left:440.20px;top:271.75px;font-size:7.5px;line-height:7.5px;color:#d8d8d8;font-weight:400;letter-spacing:0px;">Presented To</div>
<div class="r" style="left:374.5px;top:301.2px;width:219px;height:1px;background:#2e2e2e;"></div>
<svg class="r" style="left:379.6px;top:289.5px" width="12" height="9"><path d="M0.6 4.5 Q6 -1.6 11.4 4.5 Q6 10.6 0.6 4.5 Z" fill="#e8e8e8"/><circle cx="6" cy="4.5" r="2.1" fill="#2c2c2c"/></svg>
<svg class="r" style="left:411.5px;top:290.3px" width="5" height="8"><path d="M0.9 0.6 L3.6 3.6 L0.9 6.6" fill="none" stroke="#a8a8a8" stroke-width="1.2"/></svg>
<svg class="r" style="left:419.8px;top:289.5px" width="12" height="10"><path d="M0.5 0.5 H4 L5 1.8 H11 V9 H0.5 Z" fill="#e2e2e2"/><path d="M0.5 2.5 H11" stroke="#9a9a9a" stroke-width="0.6"/></svg>
<div class="t p" style="left:440.20px;top:290.25px;font-size:7.5px;line-height:7.5px;color:#d8d8d8;font-weight:400;letter-spacing:0px;">Designer Creative</div>
<div class="r" style="left:374.5px;top:319.7px;width:219px;height:1px;background:#2e2e2e;"></div>
<svg class="r" style="left:379.6px;top:308.0px" width="12" height="9"><path d="M0.6 4.5 Q6 -1.6 11.4 4.5 Q6 10.6 0.6 4.5 Z" fill="#e8e8e8"/><circle cx="6" cy="4.5" r="2.1" fill="#2c2c2c"/></svg>
<svg class="r" style="left:411.5px;top:308.8px" width="5" height="8"><path d="M0.9 0.6 L3.6 3.6 L0.9 6.6" fill="none" stroke="#a8a8a8" stroke-width="1.2"/></svg>
<svg class="r" style="left:419.8px;top:308.0px" width="12" height="10"><path d="M0.5 0.5 H4 L5 1.8 H11 V9 H0.5 Z" fill="#e2e2e2"/><path d="M0.5 2.5 H11" stroke="#9a9a9a" stroke-width="0.6"/></svg>
<div class="t p" style="left:440.20px;top:308.75px;font-size:7.5px;line-height:7.5px;color:#d8d8d8;font-weight:400;letter-spacing:0px;">Signature</div>
<div class="r" style="left:374.5px;top:338.2px;width:219px;height:1px;background:#2e2e2e;"></div>
<svg class="r" style="left:379.6px;top:326.5px" width="12" height="9"><path d="M0.6 4.5 Q6 -1.6 11.4 4.5 Q6 10.6 0.6 4.5 Z" fill="#e8e8e8"/><circle cx="6" cy="4.5" r="2.1" fill="#2c2c2c"/></svg>
<svg class="r" style="left:411.5px;top:327.3px" width="5" height="8"><path d="M0.9 0.6 L3.6 3.6 L0.9 6.6" fill="none" stroke="#a8a8a8" stroke-width="1.2"/></svg>
<svg class="r" style="left:419.8px;top:326.5px" width="12" height="10"><path d="M0.5 0.5 H4 L5 1.8 H11 V9 H0.5 Z" fill="#e2e2e2"/><path d="M0.5 2.5 H11" stroke="#9a9a9a" stroke-width="0.6"/></svg>
<div class="t p" style="left:440.20px;top:327.25px;font-size:7.5px;line-height:7.5px;color:#d8d8d8;font-weight:400;letter-spacing:0px;">Layout</div>
<div class="r" style="left:374.5px;top:356.7px;width:219px;height:1px;background:#2e2e2e;"></div>
<svg class="r" style="left:379.6px;top:345.0px" width="12" height="9"><path d="M0.6 4.5 Q6 -1.6 11.4 4.5 Q6 10.6 0.6 4.5 Z" fill="#e8e8e8"/><circle cx="6" cy="4.5" r="2.1" fill="#2c2c2c"/></svg>
<svg class="r" style="left:399px;top:346.5px" width="8" height="5"><path d="M0.6 0.8 L3.6 3.8 L6.6 0.8" fill="none" stroke="#a8a8a8" stroke-width="1.2"/></svg>
<svg class="r" style="left:407.8px;top:344.7px" width="12" height="10"><path d="M0.5 0.5 H4.5 L5.5 1.8 H11 V9 H0.5 Z" fill="#e6e6e6"/><path d="M1.5 3.2 H10 V4.2 H1.5 Z" fill="#3a3a3a"/><path d="M1.5 5.8 H10" stroke="#9a9a9a" stroke-width="0.7"/></svg>
<div class="t p" style="left:427.40px;top:345.74px;font-size:7.4px;line-height:7.4px;color:#d8d8d8;font-weight:400;letter-spacing:0px;">Shapes</div>
<div class="r" style="left:374.5px;top:375.2px;width:219px;height:1px;background:#2e2e2e;"></div>
<svg class="r" style="left:379.6px;top:363.5px" width="12" height="9"><path d="M0.6 4.5 Q6 -1.6 11.4 4.5 Q6 10.6 0.6 4.5 Z" fill="#e8e8e8"/><circle cx="6" cy="4.5" r="2.1" fill="#2c2c2c"/></svg>
<svg class="r" style="left:411.5px;top:364.3px" width="5" height="8"><path d="M0.9 0.6 L3.6 3.6 L0.9 6.6" fill="none" stroke="#a8a8a8" stroke-width="1.2"/></svg>
<svg class="r" style="left:419.8px;top:363.5px" width="12" height="10"><path d="M0.5 0.5 H4 L5 1.8 H11 V9 H0.5 Z" fill="#e2e2e2"/><path d="M0.5 2.5 H11" stroke="#9a9a9a" stroke-width="0.6"/></svg>
<div class="t p" style="left:440.20px;top:364.25px;font-size:7.5px;line-height:7.5px;color:#d8d8d8;font-weight:400;letter-spacing:0px;">&lt;Path&gt;</div>
<div class="r" style="left:374.5px;top:393.7px;width:219px;height:1px;background:#2e2e2e;"></div>
<svg class="r" style="left:379.6px;top:382.0px" width="12" height="9"><path d="M0.6 4.5 Q6 -1.6 11.4 4.5 Q6 10.6 0.6 4.5 Z" fill="#e8e8e8"/><circle cx="6" cy="4.5" r="2.1" fill="#2c2c2c"/></svg>
<svg class="r" style="left:411.5px;top:382.8px" width="5" height="8"><path d="M0.9 0.6 L3.6 3.6 L0.9 6.6" fill="none" stroke="#a8a8a8" stroke-width="1.2"/></svg>
<svg class="r" style="left:419.8px;top:382.0px" width="12" height="10"><path d="M0.5 0.5 H4 L5 1.8 H11 V9 H0.5 Z" fill="#e2e2e2"/><path d="M0.5 2.5 H11" stroke="#9a9a9a" stroke-width="0.6"/></svg>
<div class="t p" style="left:440.20px;top:382.75px;font-size:7.5px;line-height:7.5px;color:#d8d8d8;font-weight:400;letter-spacing:0px;">&lt;Path&gt;</div>
<div class="r" style="left:374.5px;top:412.2px;width:219px;height:1px;background:#2e2e2e;"></div>
<svg class="r" style="left:379.6px;top:400.5px" width="12" height="9"><path d="M0.6 4.5 Q6 -1.6 11.4 4.5 Q6 10.6 0.6 4.5 Z" fill="#e8e8e8"/><circle cx="6" cy="4.5" r="2.1" fill="#2c2c2c"/></svg>
<svg class="r" style="left:411.5px;top:401.3px" width="5" height="8"><path d="M0.9 0.6 L3.6 3.6 L0.9 6.6" fill="none" stroke="#a8a8a8" stroke-width="1.2"/></svg>
<svg class="r" style="left:419.8px;top:400.5px" width="12" height="10"><path d="M0.5 0.5 H4 L5 1.8 H11 V9 H0.5 Z" fill="#e2e2e2"/><path d="M0.5 2.5 H11" stroke="#9a9a9a" stroke-width="0.6"/></svg>
<div class="t p" style="left:440.20px;top:401.25px;font-size:7.5px;line-height:7.5px;color:#d8d8d8;font-weight:400;letter-spacing:0px;">&lt;Path&gt;</div>
<div class="r" style="left:396.7px;top:413.9px;width:196.8px;height:17.4px;background:#474747;"></div>
<div class="r" style="left:374.5px;top:430.7px;width:219px;height:1px;background:#2e2e2e;"></div>
<svg class="r" style="left:379.6px;top:419.0px" width="12" height="9"><path d="M0.6 4.5 Q6 -1.6 11.4 4.5 Q6 10.6 0.6 4.5 Z" fill="#e8e8e8"/><circle cx="6" cy="4.5" r="2.1" fill="#2c2c2c"/></svg>
<svg class="r" style="left:411.5px;top:419.8px" width="5" height="8"><path d="M0.9 0.6 L3.6 3.6 L0.9 6.6" fill="none" stroke="#a8a8a8" stroke-width="1.2"/></svg>
<svg class="r" style="left:419.8px;top:419.0px" width="12" height="10"><path d="M0.5 0.5 H4 L5 1.8 H11 V9 H0.5 Z" fill="#e2e2e2"/><path d="M0.5 2.5 H11" stroke="#9a9a9a" stroke-width="0.6"/></svg>
<div class="t p" style="left:440.20px;top:419.75px;font-size:7.5px;line-height:7.5px;color:#d8d8d8;font-weight:400;letter-spacing:0px;">&lt;Compound Path&gt;</div>
<div class="r" style="left:374.5px;top:449.2px;width:219px;height:1px;background:#2e2e2e;"></div>
<svg class="r" style="left:379.6px;top:437.5px" width="12" height="9"><path d="M0.6 4.5 Q6 -1.6 11.4 4.5 Q6 10.6 0.6 4.5 Z" fill="#e8e8e8"/><circle cx="6" cy="4.5" r="2.1" fill="#2c2c2c"/></svg>
<svg class="r" style="left:411.5px;top:438.3px" width="5" height="8"><path d="M0.9 0.6 L3.6 3.6 L0.9 6.6" fill="none" stroke="#a8a8a8" stroke-width="1.2"/></svg>
<svg class="r" style="left:419.8px;top:437.5px" width="12" height="10"><path d="M0.5 0.5 H4 L5 1.8 H11 V9 H0.5 Z" fill="#e2e2e2"/><path d="M0.5 2.5 H11" stroke="#9a9a9a" stroke-width="0.6"/></svg>
<div class="t p" style="left:440.20px;top:438.25px;font-size:7.5px;line-height:7.5px;color:#d8d8d8;font-weight:400;letter-spacing:0px;">&lt;Path&gt;</div>
<div class="r" style="left:374.5px;top:467.7px;width:219px;height:1px;background:#2e2e2e;"></div>
<svg class="r" style="left:379.6px;top:456.0px" width="12" height="9"><path d="M0.6 4.5 Q6 -1.6 11.4 4.5 Q6 10.6 0.6 4.5 Z" fill="#e8e8e8"/><circle cx="6" cy="4.5" r="2.1" fill="#2c2c2c"/></svg>
<svg class="r" style="left:411.5px;top:456.8px" width="5" height="8"><path d="M0.9 0.6 L3.6 3.6 L0.9 6.6" fill="none" stroke="#a8a8a8" stroke-width="1.2"/></svg>
<svg class="r" style="left:419.8px;top:456.0px" width="12" height="10"><path d="M0.5 0.5 H4 L5 1.8 H11 V9 H0.5 Z" fill="#e2e2e2"/><path d="M0.5 2.5 H11" stroke="#9a9a9a" stroke-width="0.6"/></svg>
<div class="t p" style="left:440.20px;top:456.75px;font-size:7.5px;line-height:7.5px;color:#d8d8d8;font-weight:400;letter-spacing:0px;">&lt;Path&gt;</div>
<svg class="r" style="left:379.6px;top:480.5px" width="12" height="9"><path d="M0.6 4.5 Q6 -1.6 11.4 4.5 Q6 10.6 0.6 4.5 Z" fill="#e8e8e8"/><circle cx="6" cy="4.5" r="2.1" fill="#2c2c2c"/></svg>
<div class="r" style="left:399.3px;top:472px;width:17.4px;height:23.4px;background:#352b79;box-shadow:0 0 0 1px #4a4a4a"></div>
<svg class="r" style="left:407.5px;top:487.5px" width="10" height="9"><rect x="0" y="0" width="10" height="9" fill="#323232"/><rect x="2" y="2" width="6" height="5" fill="none" stroke="#ddd" stroke-width="1"/><path d="M0.5 2 H9.5 M0.5 7 H9.5 M2 0.5 V8.5 M8 0.5 V8.5" stroke="#ddd" stroke-width="0.8"/></svg>
<div class="t p" style="left:423.70px;top:480.85px;font-size:7.5px;line-height:7.5px;color:#d8d8d8;font-weight:400;letter-spacing:0px;">Background</div>
<div class="r" style="left:374.5px;top:499.5px;width:219px;height:1px;background:#2a2a2a;"></div>
<div class="r" style="left:374.5px;top:500.5px;width:219px;height:35px;background:#2c2c2c;"></div>
<div class="r" style="left:374.5px;top:535.8px;width:232px;height:17.7px;background:#303030;"></div>
<div class="r" style="left:374.5px;top:535px;width:232px;height:1px;background:#2a2a2a;"></div>
<div class="r" style="left:374.5px;top:553.5px;width:232px;height:1.5px;background:#1f1f1f;"></div>
<div class="r" style="left:374.5px;top:555px;width:232px;height:4.2px;background:#2c2c2c;"></div>
<svg class="r" style="left:450px;top:536px" width="140" height="17"><rect x="6" y="5.6" width="6.6" height="5" rx="2.5" fill="none" stroke="#7a7a7a" stroke-width="1.1"/><rect x="10.2" y="5.6" width="6.6" height="5" rx="2.5" fill="none" stroke="#7a7a7a" stroke-width="1.1"/><text x="28" y="12.5" font-family="Liberation Serif" font-style="italic" font-size="11" fill="#e0e0e0">fx</text><circle cx="36" cy="14" r="0.9" fill="#ddd"/><rect x="45.5" y="4" width="10.5" height="8.5" fill="#e6e6e6"/><ellipse cx="50.8" cy="8.2" rx="3" ry="2.6" fill="#303030"/><circle cx="71.8" cy="8.2" r="4.6" fill="#e0e0e0"/><path d="M68.8 11.2 A4.3 4.3 0 0 1 74.9 5.1 Z" fill="#3a3a3a"/><circle cx="71.8" cy="8.2" r="4.6" fill="none" stroke="#e0e0e0" stroke-width="1"/><circle cx="76.6" cy="13.6" r="1" fill="#ddd"/><path d="M86 3.8 H90 L91 5 H96 V12.5 H86 Z" fill="#e0e0e0"/><path d="M86 6.3 H96" stroke="#888" stroke-width="0.6"/><rect x="107" y="3.5" width="9" height="9" fill="none" stroke="#e0e0e0" stroke-width="1.2"/><path d="M111.5 5.5 V10.5 M109 8 H114" stroke="#e0e0e0" stroke-width="1.1"/><path d="M126.5 4.5 H134 M129 4.5 V3 H131.5 V4.5 M127.5 5.5 H133 L132.3 13 H128.2 Z" fill="none" stroke="#d0d0d0" stroke-width="1"/><path d="M129.3 7 V11.5 M131.2 7 V11.5" stroke="#d0d0d0" stroke-width="0.8"/></svg>
</body></html>
